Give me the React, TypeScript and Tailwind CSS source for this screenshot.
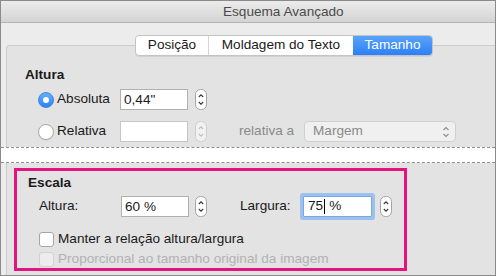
import React from "react";

function Stepper({ disabled = false }: { disabled?: boolean }) {
    const stroke = disabled ? "#cdcdcd" : "#a3a3a3";
    const chev = disabled ? "#c2c2c2" : "#3a3a3a";
    return (
        <svg width="12" height="21" viewBox="0 0 12 21" className="shrink-0">
            <rect x="0.5" y="0.5" width="11" height="20" rx="5" fill={disabled ? "#f1f1f1" : "#ffffff"} stroke={stroke} />
            <path d="M3.8 8 L6 5.8 L8.2 8" fill="none" stroke={chev} strokeWidth="1.1" />
            <path d="M3.8 13 L6 15.2 L8.2 13" fill="none" stroke={chev} strokeWidth="1.1" />
        </svg>
    );
}

function Radio({ checked }: { checked: boolean }) {
    if (checked) {
        return (
            <div className="size-4 shrink-0 rounded-full bg-gradient-to-b from-[#69aefb] to-[#2a82f4] border border-[#3a86e6] flex items-center justify-center">
                <div className="size-[6px] rounded-full bg-white" />
            </div>
        );
    }
    return <div className="size-4 shrink-0 rounded-full bg-white border border-[#a8a8a8] shadow-[0_1px_0_rgba(0,0,0,0.05)]" />;
}

function Checkbox({ disabled = false }: { disabled?: boolean }) {
    return (
        <div
            className={`size-[15px] shrink-0 rounded-[3px] border ${disabled ? "bg-[#ececec] border-[#d2d2d2]" : "bg-white border-[#a6a6a6]"
                }`}
        />
    );
}

export default function App() {
    return (
        <div
            className="w-[496px] h-[276px] overflow-hidden border border-[#8b8b8b] bg-[#ececec] text-[13.6px] text-[#1a1a1a]"
            style={{ fontFamily: '"Liberation Sans", Arial, sans-serif' }}
        >
            {/* title bar */}
            <div className="h-[22px] border-b border-[#b4b4b4] bg-gradient-to-b from-[#ececec] to-[#d4d4d4] pl-[222px] leading-[21px] text-[#4b4b4b]">
                Esquema Avançado
            </div>

            {/* tabs */}
            <div className="relative z-10 mt-[12px] ml-[134px] flex h-[21px] w-[298px] rounded-[4px] border border-[#c4c4c4] bg-white shadow-[0_1px_0_rgba(0,0,0,0.08)] overflow-hidden">
                <div className="w-[73px] flex items-center justify-center border-r border-[#d4d4d4]">Posição</div>
                <div className="w-[144px] flex items-center justify-center">Moldagem do Texto</div>
                <div className="flex-1 flex items-center justify-center text-white bg-gradient-to-b from-[#5aa3fa] to-[#2a80f5]">
                    Tamanho
                </div>
            </div>

            {/* Altura group */}
            <div className="-mt-[11px] ml-[5px] h-[102px] rounded-tl-[4px] border-t border-l border-[#cdcdcd] bg-[#e3e3e3] pl-[18px] pt-[21px]">
                <div className="font-bold leading-4">Altura</div>

                <div className="mt-[6px] ml-[13px] flex h-[21px] items-center">
                    <Radio checked />
                    <span className="ml-[3px] w-[63px]">Absoluta</span>
                    <div className="h-[21px] w-[68px] border border-[#b0b0b0] bg-white pl-[3px] leading-[19px]">0,44"</div>
                    <div className="ml-[7px]">
                        <Stepper />
                    </div>
                </div>

                <div className="mt-[11px] ml-[13px] flex h-[21px] items-center">
                    <Radio checked={false} />
                    <span className="ml-[3px] w-[63px]">Relativa</span>
                    <div className="h-[21px] w-[68px] border border-[#c6c6c6] bg-white" />
                    <div className="ml-[7px]">
                        <Stepper disabled />
                    </div>
                    <span className="ml-[32px] w-[65px] text-[#8a8a8a]">relativa a</span>
                    <div className="flex h-[21px] w-[152px] items-center justify-between rounded-[4px] border border-[#cfcfcf] bg-[#f0f0f0] pl-[8px] pr-[5px] text-[#8a8a8a]">
                        <span>Margem</span>
                        <svg width="8" height="14" viewBox="0 0 8 14">
                            <path d="M1.5 5 L4 2.5 L6.5 5" fill="none" stroke="#8e8e8e" strokeWidth="1.1" />
                            <path d="M1.5 9 L4 11.5 L6.5 9" fill="none" stroke="#8e8e8e" strokeWidth="1.1" />
                        </svg>
                    </div>
                </div>
            </div>

            {/* cut-off marker */}
            <div className="h-[16px] border-y border-dashed border-[#8e8e8e] bg-white" />

            {/* Escala group */}
            <div className="ml-[5px] h-[112px] border-l border-[#cdcdcd] bg-[#e3e3e3] pt-[5px] pl-[7px]">
                <div className="h-[103px] w-[393px] border-[3px] border-[#e4147f] pl-[11px] pt-[4px]">
                    <div className="font-bold leading-4">Escala</div>

                    <div className="mt-[5px] ml-[11px] flex h-[21px] items-center">
                        <span className="w-[82px]">Altura:</span>
                        <div className="h-[21px] w-[68px] border border-[#b0b0b0] bg-white pl-[3px] leading-[19px]">60 %</div>
                        <div className="ml-[6px]">
                            <Stepper />
                        </div>
                        <span className="ml-[33px] w-[63px]">Largura:</span>
                        <div className="flex h-[21px] w-[69px] items-center rounded-[1px] border border-[#7aa7e0] bg-white pl-[4px] ring-[3px] ring-[#92bcef]/90">
                            <span>75</span>
                            <span className="ml-[1px] inline-block h-[15px] w-px bg-black" />
                            <span className="ml-[4px]">%</span>
                        </div>
                        <div className="ml-[8px]">
                            <Stepper />
                        </div>
                    </div>

                    <div className="mt-[14px] ml-[11px] flex h-4 items-center">
                        <Checkbox />
                        <span className="ml-[4px]">Manter a relação altura/largura</span>
                    </div>
                    <div className="mt-[4px] ml-[11px] flex h-4 items-center">
                        <Checkbox disabled />
                        <span className="ml-[4px] text-[#b2b2b2]">Proporcional ao tamanho original da imagem</span>
                    </div>
                </div>
            </div>
        </div>
    );
}
